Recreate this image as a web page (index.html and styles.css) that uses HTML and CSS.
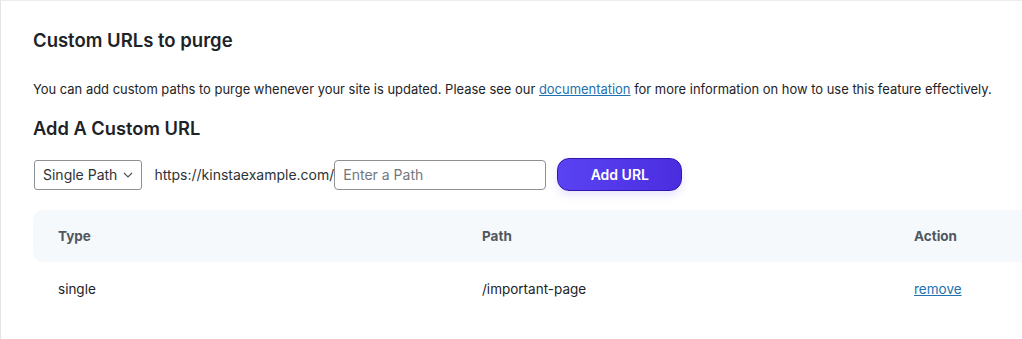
FILE: index.html
```html
<!DOCTYPE html>
<html lang="en">

<head>
    <meta charset="UTF-8">
    <meta name="viewport" content="width=device-width, initial-scale=1.0">
    <title>Custom URLs to purge</title>
    <link rel="stylesheet" href="styles.css">
</head>

<body>
    <div class="panel">
        <h2 class="panel-title">Custom URLs to purge</h2>

        <p class="panel-desc">You can add custom paths to purge whenever your site is updated. Please see our
            <a href="#">documentation</a> for more information on how to use this feature effectively.</p>

        <h3 class="section-title">Add A Custom URL</h3>

        <div class="add-row">
            <div class="select">
                <span>Single Path</span>
                <svg width="10" height="6" viewBox="0 0 10 6"><path d="M1 1l4 4 4-4" fill="none" stroke="#50575e" stroke-width="1.2"/></svg>
            </div>
            <span class="base-url">https://kinstaexample.com/</span>
            <input class="path-input" type="text" placeholder="Enter a Path">
            <button class="add-btn">Add URL</button>
        </div>

        <div class="url-table">
            <div class="row head">
                <div>Type</div>
                <div>Path</div>
                <div>Action</div>
            </div>
            <div class="row">
                <div>single</div>
                <div>/important-page</div>
                <div><a href="#">remove</a></div>
            </div>
        </div>
    </div>
</body>

</html>
```

FILE: styles.css
```css
body {
    margin: 0;
    font-family: Inter, "Noto Sans", sans-serif;
    background: #fff;
    color: #1d2327;
}

.panel {
    border-top: 1px solid #ececef;
    border-left: 1px solid #e4e4e7;
    padding: 28px 0 24px 32px;
    min-height: 300px;
}

.panel-title {
    margin: 0;
    font-size: 18.5px;
    font-weight: 600;
    line-height: 22px;
}

.panel-desc {
    margin: 29px 0 0;
    font-size: 12.95px;
    line-height: 18px;
}

.panel-desc a,
.row a {
    color: #2271b1;
}

.section-title {
    margin: 18px 0 0;
    font-size: 18.3px;
    font-weight: 600;
    line-height: 24px;
}

.add-row {
    display: flex;
    align-items: center;
    margin-top: 18px;
}

.select {
    display: flex;
    align-items: center;
    gap: 6px;
    height: 28px;
    padding: 0 8px 0 8px;
    border: 1px solid #8c8f94;
    border-radius: 3px;
    font-size: 14px;
    color: #2c3338;
    margin-left: 1px;
}

.base-url {
    margin-left: 12px;
    font-size: 14px;
    color: #2c3338;
}

.path-input {
    width: 212px;
    height: 30px;
    box-sizing: border-box;
    margin: 0;
    padding: 0 8px;
    border: 1px solid #8c8f94;
    border-radius: 4px;
    font-family: inherit;
    font-size: 14px;
}

.path-input::placeholder {
    color: #72777c;
}

.add-btn {
    margin-left: 11px;
    width: 125px;
    height: 33px;
    border: 1px solid #3216b0;
    border-radius: 12px;
    background: linear-gradient(90deg, #5a43f2, #4a2ddf);
    color: #fff;
    font-family: inherit;
    font-size: 14px;
    font-weight: 600;
    box-shadow: 0 4px 8px rgba(90, 67, 242, 0.15);
}

.url-table {
    margin-top: 19px;
}

.row {
    display: grid;
    grid-template-columns: 424px 432px 1fr;
    align-items: center;
    height: 53px;
    padding-left: 25px;
    font-size: 13.5px;
    color: #1d2327;
}

.row.head {
    height: 52px;
    background: #f6f9fc;
    border-radius: 10px 0 0 10px;
    font-weight: 700;
    color: #50575e;
}
```
